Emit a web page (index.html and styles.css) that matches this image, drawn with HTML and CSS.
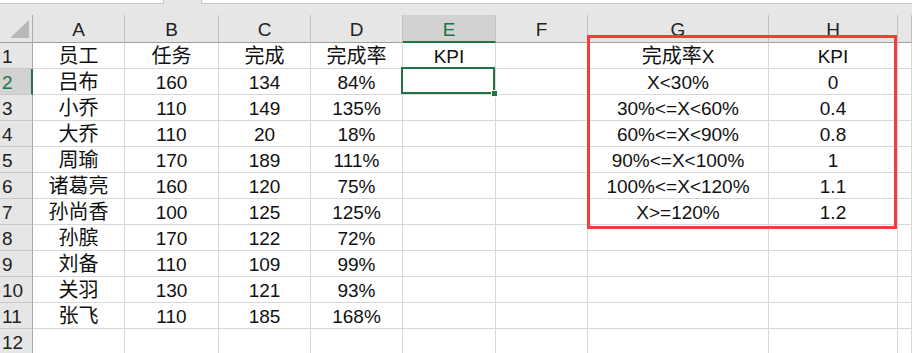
FILE: index.html
```html
<!DOCTYPE html>
<html lang="zh-CN">
<head>
<meta charset="utf-8">
<title>Sheet</title>
<link rel="stylesheet" href="styles.css">
</head>
<body>
<div class="app">
  <div class="topbar">
    <div class="namebox"></div>
    <div class="fxgap"></div>
    <div class="fxbox"></div>
  </div>
  <div class="sheet">
    <div class="corner"><svg width="33" height="27" viewBox="0 0 33 27"><polygon points="10,23 29,23 29,5" fill="#b9b9b9"/></svg></div>
    <div class="colh">A</div><div class="colh">B</div><div class="colh">C</div><div class="colh">D</div><div class="colh active">E</div><div class="colh">F</div><div class="colh">G</div><div class="colh">H</div><div class="colh"></div>

    <div class="rowh">1</div><div class="c zh">员工</div><div class="c zh">任务</div><div class="c zh">完成</div><div class="c zh">完成率</div><div class="c">KPI</div><div class="c"></div><div class="c"><span class="zh">完成率</span>X</div><div class="c">KPI</div><div class="c"></div>
    <div class="rowh active">2</div><div class="c zh">吕布</div><div class="c">160</div><div class="c">134</div><div class="c">84%</div><div class="c sel"><span class="selbox"></span><span class="handle"></span></div><div class="c"></div><div class="c">X&lt;30%</div><div class="c">0</div><div class="c"></div>
    <div class="rowh">3</div><div class="c zh">小乔</div><div class="c">110</div><div class="c">149</div><div class="c">135%</div><div class="c"></div><div class="c"></div><div class="c">30%&lt;=X&lt;60%</div><div class="c">0.4</div><div class="c"></div>
    <div class="rowh">4</div><div class="c zh">大乔</div><div class="c">110</div><div class="c">20</div><div class="c">18%</div><div class="c"></div><div class="c"></div><div class="c">60%&lt;=X&lt;90%</div><div class="c">0.8</div><div class="c"></div>
    <div class="rowh">5</div><div class="c zh">周瑜</div><div class="c">170</div><div class="c">189</div><div class="c">111%</div><div class="c"></div><div class="c"></div><div class="c">90%&lt;=X&lt;100%</div><div class="c">1</div><div class="c"></div>
    <div class="rowh">6</div><div class="c zh">诸葛亮</div><div class="c">160</div><div class="c">120</div><div class="c">75%</div><div class="c"></div><div class="c"></div><div class="c">100%&lt;=X&lt;120%</div><div class="c">1.1</div><div class="c"></div>
    <div class="rowh">7</div><div class="c zh">孙尚香</div><div class="c">100</div><div class="c">125</div><div class="c">125%</div><div class="c"></div><div class="c"></div><div class="c">X&gt;=120%</div><div class="c">1.2</div><div class="c"></div>
    <div class="rowh">8</div><div class="c zh">孙膑</div><div class="c">170</div><div class="c">122</div><div class="c">72%</div><div class="c"></div><div class="c"></div><div class="c"></div><div class="c"></div><div class="c"></div>
    <div class="rowh">9</div><div class="c zh">刘备</div><div class="c">110</div><div class="c">109</div><div class="c">99%</div><div class="c"></div><div class="c"></div><div class="c"></div><div class="c"></div><div class="c"></div>
    <div class="rowh">10</div><div class="c zh">关羽</div><div class="c">130</div><div class="c">121</div><div class="c">93%</div><div class="c"></div><div class="c"></div><div class="c"></div><div class="c"></div><div class="c"></div>
    <div class="rowh">11</div><div class="c zh">张飞</div><div class="c">110</div><div class="c">185</div><div class="c">168%</div><div class="c"></div><div class="c"></div><div class="c"></div><div class="c"></div><div class="c"></div>
    <div class="rowh">12</div><div class="c"></div><div class="c"></div><div class="c"></div><div class="c"></div><div class="c"></div><div class="c"></div><div class="c"></div><div class="c"></div><div class="c"></div>
  </div>
  <div class="redbox"></div>
</div>
</body>
</html>
```

FILE: styles.css
```css
* { box-sizing: border-box; }
html, body { margin: 0; padding: 0; background: #fff; overflow: hidden; }
body {
  font-family: "Liberation Sans", "Noto Sans CJK SC", sans-serif;
  font-size: 19px;
  color: #111;
}
.app { position: relative; width: 912px; height: 353px; overflow: hidden; }

.topbar {
  display: flex;
  height: 15px;
  background: #e6e6e6;
}
.namebox {
  width: 164px; height: 4px;
  background: #fff;
  border-right: 1px solid #c6c6c6;
  border-bottom: 1px solid #c6c6c6;
}
.fxgap { width: 37px; }
.fxbox {
  flex: 1; height: 4px;
  background: #fff;
  border-left: 1px solid #c6c6c6;
  border-bottom: 1px solid #c6c6c6;
}

.sheet {
  display: grid;
  grid-template-columns: 33px 92px 94px 92px 92px 93px 92px 181px 129px 1fr;
  grid-template-rows: 28px repeat(12, 26px);
}

.corner {
  background: #e6e6e6;
  border-right: 1px solid #ababab;
  border-bottom: 1px solid #9e9e9e;
}
.corner svg { display: block; }

.colh {
  background: #e6e6e6;
  border-right: 1px solid #c2c2c2;
  border-bottom: 1px solid #9e9e9e;
  text-align: center;
  line-height: 24px;
  padding-top: 3px;
  color: #222;
}
.colh.active {
  background: #d2d2d2;
  color: #217346;
  border-bottom: 2px solid #217346;
}

.rowh {
  background: #e6e6e6;
  border-right: 1px solid #ababab;
  border-bottom: 1px solid #c8c8c8;
  padding-left: 2px;
  line-height: 21px;
  padding-top: 3px;
  color: #222;
}
.rowh.active {
  background: #d2d2d2;
  color: #217346;
  border-right: 2px solid #217346;
}

.c {
  border-right: 1px solid #d8d8d8;
  border-bottom: 1px solid #d8d8d8;
  text-align: center;
  line-height: 21px;
  padding-top: 3px;
  white-space: nowrap;
  overflow: visible;
}
.zh { font-size: 20px; }
.c.sel { position: relative; }
.selbox {
  position: absolute;
  top: -2px; left: -2px; right: 0; bottom: 0;
  border: 2px solid #217346;
}
.handle {
  position: absolute;
  right: -3px; bottom: -3px;
  width: 7px; height: 7px;
  background: #217346;
  border: 1px solid #fff;
}

.redbox {
  position: absolute;
  left: 587px; top: 35px;
  width: 310px; height: 194px;
  border: 3px solid #f63b3b;
  pointer-events: none;
}
```
